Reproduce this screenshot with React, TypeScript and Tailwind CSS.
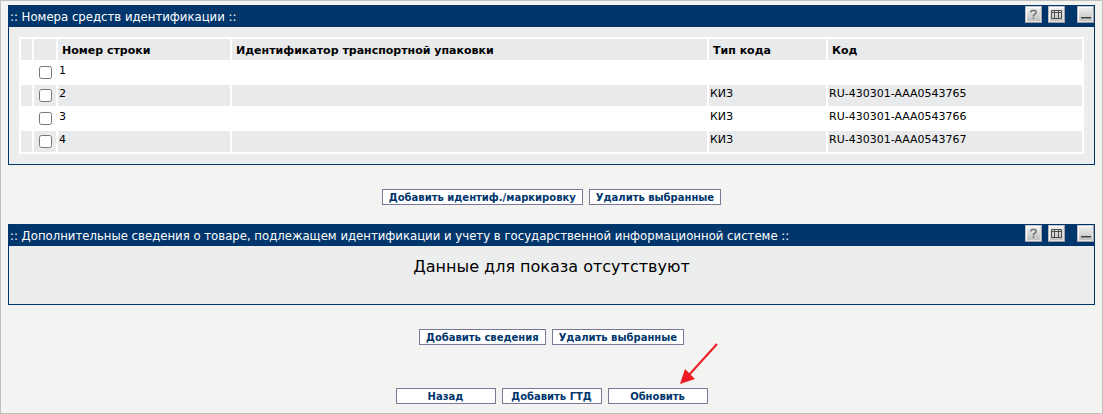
import { useState } from "react";
import type { ReactNode } from "react";

type Row = { n: number; pack: string; type: string; code: string };

const ROWS: Row[] = [
  { n: 1, pack: "", type: "", code: "" },
  { n: 2, pack: "", type: "КИЗ", code: "RU-430301-AAA0543765" },
  { n: 3, pack: "", type: "КИЗ", code: "RU-430301-AAA0543766" },
  { n: 4, pack: "", type: "КИЗ", code: "RU-430301-AAA0543767" },
];

/* square grey button in a panel header */
function ToolButton({ label, children }: { label: string; children: ReactNode }) {
  return (
    <button
      type="button"
      aria-label={label}
      title={label}
      className="block size-[17px] border border-t-[#c9c4cb] border-l-[#b9b3bb] border-r-[#a8a2ac] border-b-[#a09aa4] bg-linear-to-b from-[#f2f2f2] to-[#bdbdbd]"
    >
      <svg width="15" height="15" viewBox="0 0 15 15" fill="none" aria-hidden>
        <path d="M0.5 14.5V0.5H14.5" stroke="#ffffff" />
        <path d="M14.5 1V14.5H1" stroke="#e2e2e2" />
        {children}
      </svg>
    </button>
  );
}

function Panel({ title, children }: { title: string; children: ReactNode }) {
  return (
    <section className="border border-[#00366c] bg-[#eceeed]">
      <header className="flex h-[21px] items-start justify-between bg-[#00366c]">
        <h2 className="pl-px font-['DejaVu_Sans_Condensed','DejaVu_Sans',sans-serif] text-[13px] leading-[21px] text-white [font-stretch:condensed]">
          :: {title} ::
        </h2>
        <div className="flex">
          <ToolButton label="Справка">
            <path d="M5 5.5V4.5L6 3.5H9L10 4.5V6L7.5 8.5V9.5M7.5 10.5V12" stroke="#707070" strokeWidth="1.5" />
          </ToolButton>
          <div className="ml-1.5">
            <ToolButton label="Столбцы">
              <path d="M2.5 3.5H12.5V11.5H2.5ZM2.5 5.5H12.5M5.5 3.5V11.5M9.5 3.5V11.5" stroke="#4c4c4c" />
            </ToolButton>
          </div>
          <div className="ml-3">
            <ToolButton label="Свернуть">
              <path d="M3 10.5H13" stroke="#404040" />
              <path d="M3 11.5H13" stroke="#8a8a8a" />
            </ToolButton>
          </div>
        </div>
      </header>
      {children}
    </section>
  );
}

function FormButton({ wide, children }: { wide?: boolean; children: ReactNode }) {
  return (
    <button
      type="button"
      className={`h-4 border border-[#7a7799] bg-white pt-px text-[10px] leading-[13px] font-bold whitespace-nowrap text-[#00366c] ${wide ? "w-[100px]" : "px-1.5"}`}
    >
      {children}
    </button>
  );
}

export default function App() {
  const [checked, setChecked] = useState<number[]>([]);
  const toggle = (n: number) =>
    setChecked((c) => (c.includes(n) ? c.filter((x) => x !== n) : [...c, n]));

  return (
    <main className="border border-[#c0c0c0] bg-[#f3f3f1] px-[7px] pt-1 pb-[9px] font-['DejaVu_Sans',Verdana,sans-serif] text-black">
      <Panel title="Номера средств идентификации">
        <div className="p-2.5">
          <table className="w-full table-fixed border-separate border-spacing-[2px] bg-white text-[11px] leading-[17px]">
            <colgroup>
              <col className="w-[11px]" />
              <col className="w-[22px]" />
              <col className="w-[172px]" />
              <col />
              <col className="w-[117px]" />
              <col className="w-[254px]" />
            </colgroup>
            <thead>
              <tr className="h-[21px] bg-[#e9eaec] text-left">
                <td className="p-0" />
                <td className="p-0" />
                <th className="px-1 pt-px pb-0">Номер строки</th>
                <th className="px-1 pt-px pb-0">Идентификатор транспортной упаковки</th>
                <th className="px-1 pt-px pb-0">Тип кода</th>
                <th className="px-1 pt-px pb-0">Код</th>
              </tr>
            </thead>
            <tbody>
              {ROWS.map((r) => (
                <tr key={r.n} className="h-[21px] align-top even:bg-[#e9eaec]">
                  <td className="p-0" />
                  <td className="p-0">
                    <input
                      type="checkbox"
                      aria-label={`Строка ${r.n}`}
                      checked={checked.includes(r.n)}
                      onChange={() => toggle(r.n)}
                      className="mt-1 ml-[5px] block size-[13px]"
                    />
                  </td>
                  <td className="px-px py-0">{r.n}</td>
                  <td className="px-px py-0">{r.pack}</td>
                  <td className="px-px py-0">{r.type}</td>
                  <td className="px-px py-0">{r.code}</td>
                </tr>
              ))}
            </tbody>
          </table>
        </div>
      </Panel>

      <div className="mt-6 flex justify-center gap-1.5">
        <FormButton>Добавить идентиф./маркировку</FormButton>
        <FormButton>Удалить выбранные</FormButton>
      </div>

      <div className="mt-[19px]">
        <Panel title="Дополнительные сведения о товаре, подлежащем идентификации и учету в государственной информационной системе">
          <p className="pt-[11px] pb-[27px] text-center text-base leading-5">Данные для показа отсутствуют</p>
        </Panel>
      </div>

      <div className="mt-6 flex justify-center gap-1.5">
        <FormButton>Добавить сведения</FormButton>
        <FormButton>Удалить выбранные</FormButton>
      </div>

      <div className="mt-[43px] flex justify-center gap-1.5">
        <FormButton wide>Назад</FormButton>
        <FormButton wide>Добавить ГТД</FormButton>
        <div className="relative flex">
          <FormButton wide>Обновить</FormButton>
          {/* red pointer over the refresh button */}
          <svg
            className="pointer-events-none absolute -top-[46px] left-[70px]"
            width="42"
            height="44"
            viewBox="0 0 42 44"
            aria-hidden
          >
            <path d="M39 2L10 34" stroke="#ed1c24" strokeWidth="2" fill="none" />
            <path d="M2 42L7 27L17 37Z" fill="#ed1c24" />
          </svg>
        </div>
      </div>
    </main>
  );
}
